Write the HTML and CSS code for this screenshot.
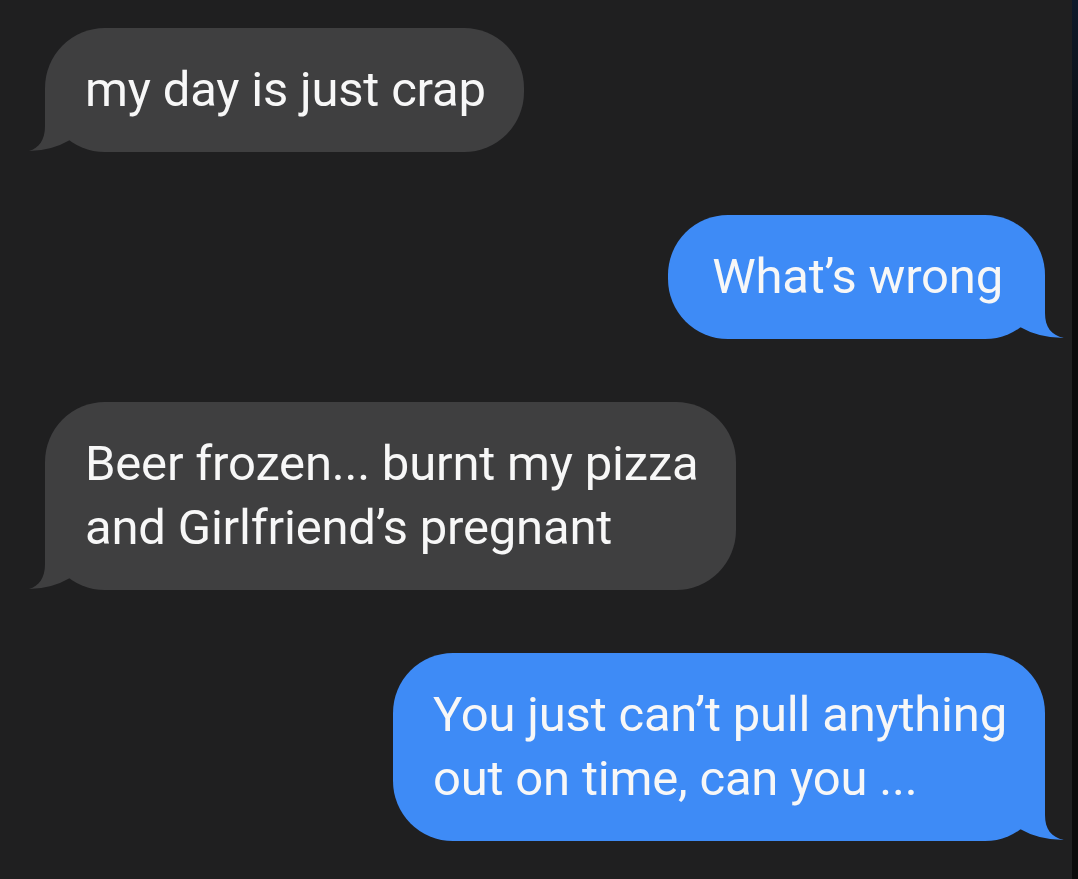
FILE: index.html
```html
<!DOCTYPE html>
<html lang="en">
<head>
<meta charset="utf-8">
<title>Messages</title>
<link rel="stylesheet" href="styles.css">
</head>
<body>
<div class="screen">
  <div class="thread">
    <div class="row in">
      <div class="bubble gray">my day is just crap
        <svg class="tail" viewBox="0 0 70 62" width="70" height="62"><path d="M20,0 L20,36 C20,50 14,58 4,61 Q26,61 45,50 L45,0 Z"/></svg>
      </div>
    </div>
    <div class="row out">
      <div class="bubble blue wide">What’s wrong
        <svg class="tail" viewBox="0 0 70 62" width="70" height="62"><path d="M20,0 L20,36 C20,50 14,58 1,61 Q26,61 45,50 L45,0 Z"/></svg>
      </div>
    </div>
    <div class="row in">
      <div class="bubble gray">Beer frozen... burnt my pizza<br>and Girlfriend’s pregnant
        <svg class="tail" viewBox="0 0 70 62" width="70" height="62"><path d="M20,0 L20,36 C20,50 14,58 4,61 Q26,61 45,50 L45,0 Z"/></svg>
      </div>
    </div>
    <div class="row out">
      <div class="bubble blue">You just can’t pull anything<br>out on time, can you ...
        <svg class="tail" viewBox="0 0 70 62" width="70" height="62"><path d="M20,0 L20,36 C20,50 14,58 1,61 Q26,61 45,50 L45,0 Z"/></svg>
      </div>
    </div>
  </div>
  <div class="edge"></div>
</div>
</body>
</html>
```
FILE: styles.css
```css
html, body {
  margin: 0;
  padding: 0;
  background: #1f1f20;
}
.screen {
  display: flex;
  width: 1078px;
  height: 879px;
  overflow: hidden;
}
.thread {
  flex: 1;
  display: flex;
  flex-direction: column;
  gap: 63px;
  padding: 28px 27px 0 45px;
}
.row {
  display: flex;
}
.row.in { justify-content: flex-start; }
.row.out { justify-content: flex-end; }
.bubble {
  position: relative;
  padding: 30px 38px 30px 40px;
  border-radius: 60px;
  font-family: Roboto, "Liberation Sans", sans-serif;
  font-size: 49px;
  line-height: 64px;
  letter-spacing: -0.2px;
  color: #f7f7f7;
  white-space: nowrap;
}
.bubble.wide { padding-left: 44px; padding-right: 42px; }
.bubble.gray { background: #3f3f40; }
.bubble.blue { background: #3e8bf6; }
.tail {
  position: absolute;
  bottom: 0;
  left: -20px;
}
.gray .tail { fill: #3f3f40; }
.blue .tail {
  fill: #3e8bf6;
  left: auto;
  right: -20px;
  transform: scaleX(-1);
}
.edge {
  width: 6px;
  background: linear-gradient(180deg, #0f1a2a 0%, #0b0b0c 20%, #0b0b0b 100%);
}
```
